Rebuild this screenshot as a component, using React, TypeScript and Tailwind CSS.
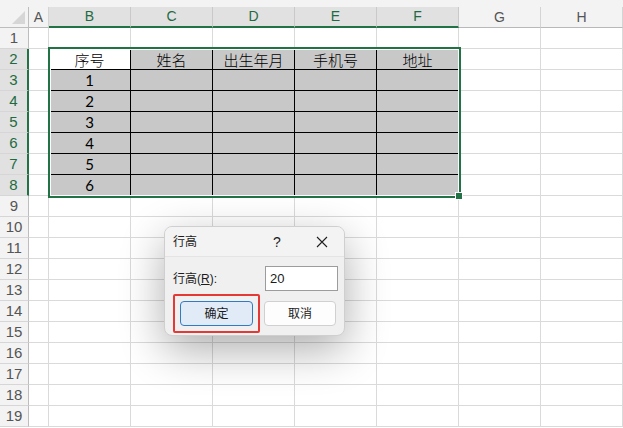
import React from 'react';

const COLS = ['A', 'B', 'C', 'D', 'E', 'F', 'G', 'H'];
const HEAD = ['', '序号', '姓名', '出生年月', '手机号', '地址', '', ''];
const ROWS = Array.from({ length: 19 }, (_, i) => i + 1);

const colWidth = (c: number) => (c === 0 ? 'w-[20px]' : 'w-[82px]');
const isSelCol = (c: number) => c >= 1 && c <= 5;
const isSelRow = (r: number) => r >= 2 && r <= 8;

const cellText = (r: number, c: number) => {
  if (r === 2) return HEAD[c];
  if (r >= 3 && r <= 8 && c === 1) return String(r - 2);
  return '';
};

const Cell: React.FC<{ r: number; c: number }> = ({ r, c }) => {
  const inTable = isSelRow(r) && isSelCol(c);
  const bg = !inTable || (r === 2 && c === 1) ? 'bg-white' : 'bg-[#c8c8c8]';
  const border = inTable ? 'border-black' : 'border-[#dadada]';
  const font =
    r === 2
      ? "font-light font-['Noto_Sans_CJK_SC',sans-serif]"
      : "font-normal font-['Lato','Noto_Sans_CJK_SC',sans-serif]";
  return (
    <div
      className={`${colWidth(c)} h-[21px] shrink-0 border-r border-b ${border} ${bg} ${font} flex items-center justify-center pt-[1px] text-[15px] leading-none text-black`}
    >
      {cellText(r, c)}
    </div>
  );
};

const Dialog: React.FC = () => (
  <div className="absolute left-[164px] top-[226px] w-[181px] h-[110px] rounded-[8px] border border-[#cfcfcf] bg-[#f0f0f0] shadow-[0_14px_44px_rgba(0,0,0,0.32)] overflow-hidden text-[12px] text-[#1b1b1b]">
    <div className="h-[30px] flex items-center pl-[8px] bg-[#f3f3f3] border-b border-[#e4e4e4]">
      <span className="flex-1">行高</span>
      <span className="w-[20px] text-center text-[14px] leading-none font-['Liberation_Sans']">?</span>
      <span className="w-[45px] ml-[12px] flex justify-center">
        <svg width="12" height="12" viewBox="0 0 12 12">
          <path d="M1 1L11 11M11 1L1 11" stroke="#1f1f1f" strokeWidth="1.1" fill="none" />
        </svg>
      </span>
    </div>
    <div className="pl-[8px] pr-[6px] pt-[9px]">
      <div className="flex items-center justify-between">
        <span>
          行高(<span className="underline">R</span>):
        </span>
        <div className="w-[73px] h-[25px] border border-[#9c9c9c] bg-white flex items-center pl-[4px] text-[13px] font-['Liberation_Sans']">
          20
        </div>
      </div>
      <div className="flex items-center mt-[3px]">
        <div className="p-[5px] border-2 border-[#e53935] rounded-[2px]">
          <div className="w-[73px] h-[25px] rounded-[4px] border border-[#2f7bc4] bg-[#e0ebf7] flex items-center justify-center">
            确定
          </div>
        </div>
        <div className="ml-[4px] w-[72px] h-[25px] rounded-[4px] border border-[#d0d0d0] bg-[#fdfdfd] flex items-center justify-center">
          取消
        </div>
      </div>
    </div>
  </div>
);

export default function App() {
  return (
    <div className="relative w-[623px] h-[428px] overflow-hidden bg-white font-['Liberation_Sans','Noto_Sans_CJK_SC',sans-serif]">
      <div className="h-[7px] bg-[#f3f3f3]" />
      {/* column headers */}
      <div className="flex h-[21px]">
        <div className="w-[29px] shrink-0 h-full bg-[#f3f3f3] border-r border-b border-[#bdbdbd] flex items-end justify-end">
          <svg width="28" height="20" viewBox="0 0 28 20">
            <polygon points="25,4 25,17 12,17" fill="#d6d6d6" />
          </svg>
        </div>
        {COLS.map((name, c) => (
          <div
            key={name}
            className={`${colWidth(c)} shrink-0 h-full flex items-center justify-center text-[14px] border-r ${
              isSelCol(c)
                ? 'bg-[#e1e1e1] text-[#1e6b41] border-b-2 border-b-[#217346] border-r-[#c9c9c9]'
                : 'bg-[#f3f3f3] text-[#555] border-b border-b-[#b8b8b8] border-r-[#d4d4d4]'
            }`}
          >
            {name}
          </div>
        ))}
      </div>
      {/* rows */}
      {ROWS.map((r) => (
        <div key={r} className="flex h-[21px]">
          <div
            className={`w-[29px] shrink-0 h-full flex items-center justify-center text-[15px] border-b border-b-[#d6d6d6] ${
              isSelRow(r)
                ? 'bg-[#e1e1e1] text-[#1e6b41] border-r-2 border-r-[#217346]'
                : 'bg-[#f3f3f3] text-[#555] border-r border-r-[#bdbdbd]'
            }`}
          >
            {r}
          </div>
          {COLS.map((_, c) => (
            <Cell key={c} r={r} c={c} />
          ))}
        </div>
      ))}
      {/* selection */}
      <div className="absolute left-[48px] top-[47px] w-[413px] h-[151px] border-2 border-[#217346] shadow-[inset_0_0_0_1px_#ffffff] pointer-events-none" />
      <div className="absolute left-[455px] top-[192px] w-[8px] h-[8px] bg-[#217346] border border-white" />
      <Dialog />
    </div>
  );
}
